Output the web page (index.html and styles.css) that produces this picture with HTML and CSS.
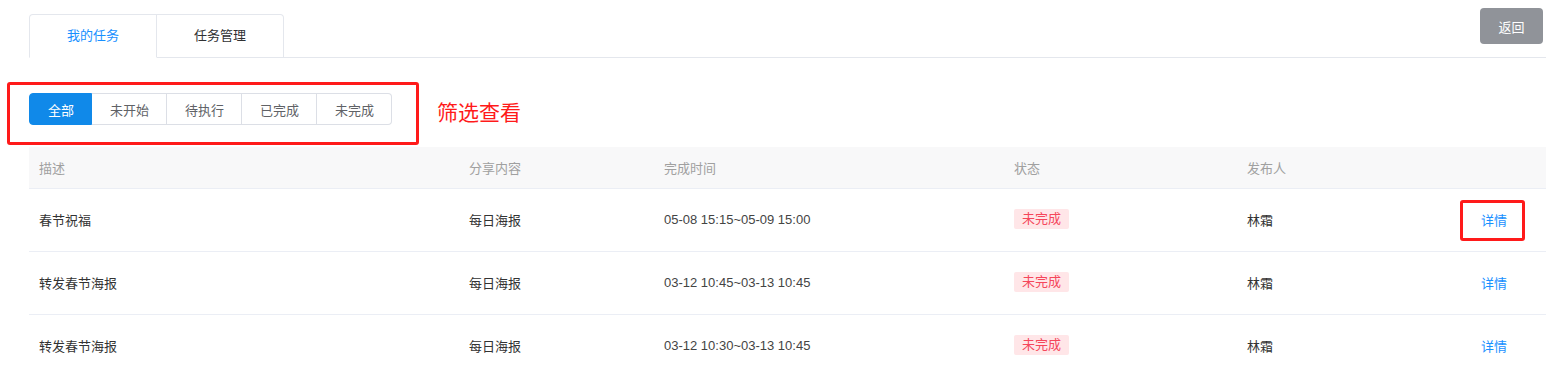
FILE: index.html
```
<!DOCTYPE html>
<html lang="zh-CN">
<head>
    <meta charset="UTF-8">
    <meta name="viewport" content="width=device-width, initial-scale=1.0">
    <title>我的任务</title>
    <link rel="stylesheet" href="styles.css">
</head>
<body>
    <div class="page">
        <div class="header">
            <div class="tabs">
                <div class="tab active">我的任务</div>
                <div class="tab">任务管理</div>
            </div>
            <button class="btn-back">返回</button>
        </div>

        <div class="filter-row">
            <div class="filter-box">
                <div class="btn-group">
                    <button class="filter-btn active">全部</button>
                    <button class="filter-btn">未开始</button>
                    <button class="filter-btn">待执行</button>
                    <button class="filter-btn">已完成</button>
                    <button class="filter-btn">未完成</button>
                </div>
            </div>
            <span class="filter-label">筛选查看</span>
        </div>

        <table class="task-table">
            <colgroup>
                <col style="width: 430px">
                <col style="width: 195px">
                <col style="width: 350px">
                <col style="width: 233px">
                <col style="width: 234px">
                <col>
            </colgroup>
            <thead>
                <tr>
                    <th>描述</th>
                    <th>分享内容</th>
                    <th>完成时间</th>
                    <th>状态</th>
                    <th>发布人</th>
                    <th></th>
                </tr>
            </thead>
            <tbody>
                <tr>
                    <td>春节祝福</td>
                    <td>每日海报</td>
                    <td class="time">05-08 15:15~05-09 15:00</td>
                    <td><span class="tag">未完成</span></td>
                    <td>林霜</td>
                    <td><a class="detail marked" href="#">详情</a></td>
                </tr>
                <tr>
                    <td>转发春节海报</td>
                    <td>每日海报</td>
                    <td class="time">03-12 10:45~03-13 10:45</td>
                    <td><span class="tag">未完成</span></td>
                    <td>林霜</td>
                    <td><a class="detail" href="#">详情</a></td>
                </tr>
                <tr>
                    <td>转发春节海报</td>
                    <td>每日海报</td>
                    <td class="time">03-12 10:30~03-13 10:45</td>
                    <td><span class="tag">未完成</span></td>
                    <td>林霜</td>
                    <td><a class="detail" href="#">详情</a></td>
                </tr>
            </tbody>
        </table>
    </div>
</body>
</html>
```

FILE: styles.css
```
body {
    margin: 0;
    font-family: "Liberation Sans", "Noto Sans CJK SC", sans-serif;
    font-size: 13px;
    color: #333;
    background-color: #fff;
}

.page {
    padding-left: 29px;
}

/* tabs + back button */
.header {
    display: flex;
    justify-content: space-between;
    align-items: flex-start;
    padding-top: 8px;
    border-bottom: 1px solid #e4e7ed;
}

.tabs {
    display: flex;
    margin-top: 6px;
    margin-bottom: -1px;
}

.tab {
    width: 126px;
    height: 42px;
    line-height: 42px;
    text-align: center;
    color: #303133;
    background-color: #fff;
    border: 1px solid #e4e7ed;
    border-left: none;
}

.tab:first-child {
    border-left: 1px solid #e4e7ed;
    border-top-left-radius: 4px;
}

.tab:last-child {
    border-top-right-radius: 4px;
}

.tab.active {
    color: #1890ff;
    border-bottom-color: #fff;
}

.btn-back {
    width: 63px;
    height: 36px;
    margin-right: 3px;
    border: none;
    border-radius: 4px;
    background-color: #909399;
    color: #fff;
    font-family: inherit;
    font-size: 13px;
    cursor: pointer;
}

/* filter */
.filter-row {
    display: flex;
    align-items: center;
    margin: 24px 0 0 -22px;
}

.filter-box {
    border: 3px solid #ff1a1a;
    border-radius: 3px;
    padding: 8px 24px 17px 19px;
}

.btn-group {
    display: flex;
}

.filter-btn {
    height: 32px;
    padding: 0 17px 0 18px;
    border: 1px solid #dcdfe6;
    border-left: none;
    background-color: #fff;
    color: #606266;
    font-family: inherit;
    font-size: 13px;
    cursor: pointer;
}

.filter-btn:first-child {
    border-left: 1px solid #dcdfe6;
    border-radius: 4px 0 0 4px;
}

.filter-btn:last-child {
    border-radius: 0 4px 4px 0;
}

.filter-btn.active {
    background-color: #1089e9;
    border-color: #1089e9;
    color: #fff;
}

.filter-label {
    margin-left: 18px;
    margin-bottom: 6px;
    font-size: 21px;
    color: #ff1a1a;
}

/* table */
.task-table {
    width: 100%;
    margin-top: 2px;
    border-collapse: collapse;
    table-layout: fixed;
}

.task-table th {
    height: 41px;
    padding: 0 10px;
    text-align: left;
    font-weight: normal;
    color: #a0a0a0;
    background-color: #f8f8f9;
    border-bottom: 1px solid #ebeef5;
}

.task-table td {
    height: 60px;
    padding: 0 10px 2px;
    color: #333;
    border-bottom: 1px solid #ebeef5;
}

.task-table td.time {
    color: #444;
}

.tag {
    display: inline-block;
    height: 20px;
    line-height: 20px;
    padding: 0 8px;
    border-radius: 2px;
    background-color: #ffe6e8;
    color: #f5475b;
}

.detail {
    color: #1890ff;
    text-decoration: none;
}

.marked {
    position: relative;
}

/* annotation box drawn over the first link */
.marked::after {
    content: '';
    position: absolute;
    left: -21px;
    right: -18px;
    top: -13px;
    bottom: -13px;
    border: 3px solid #ff1a1a;
    border-radius: 3px;
}
```
